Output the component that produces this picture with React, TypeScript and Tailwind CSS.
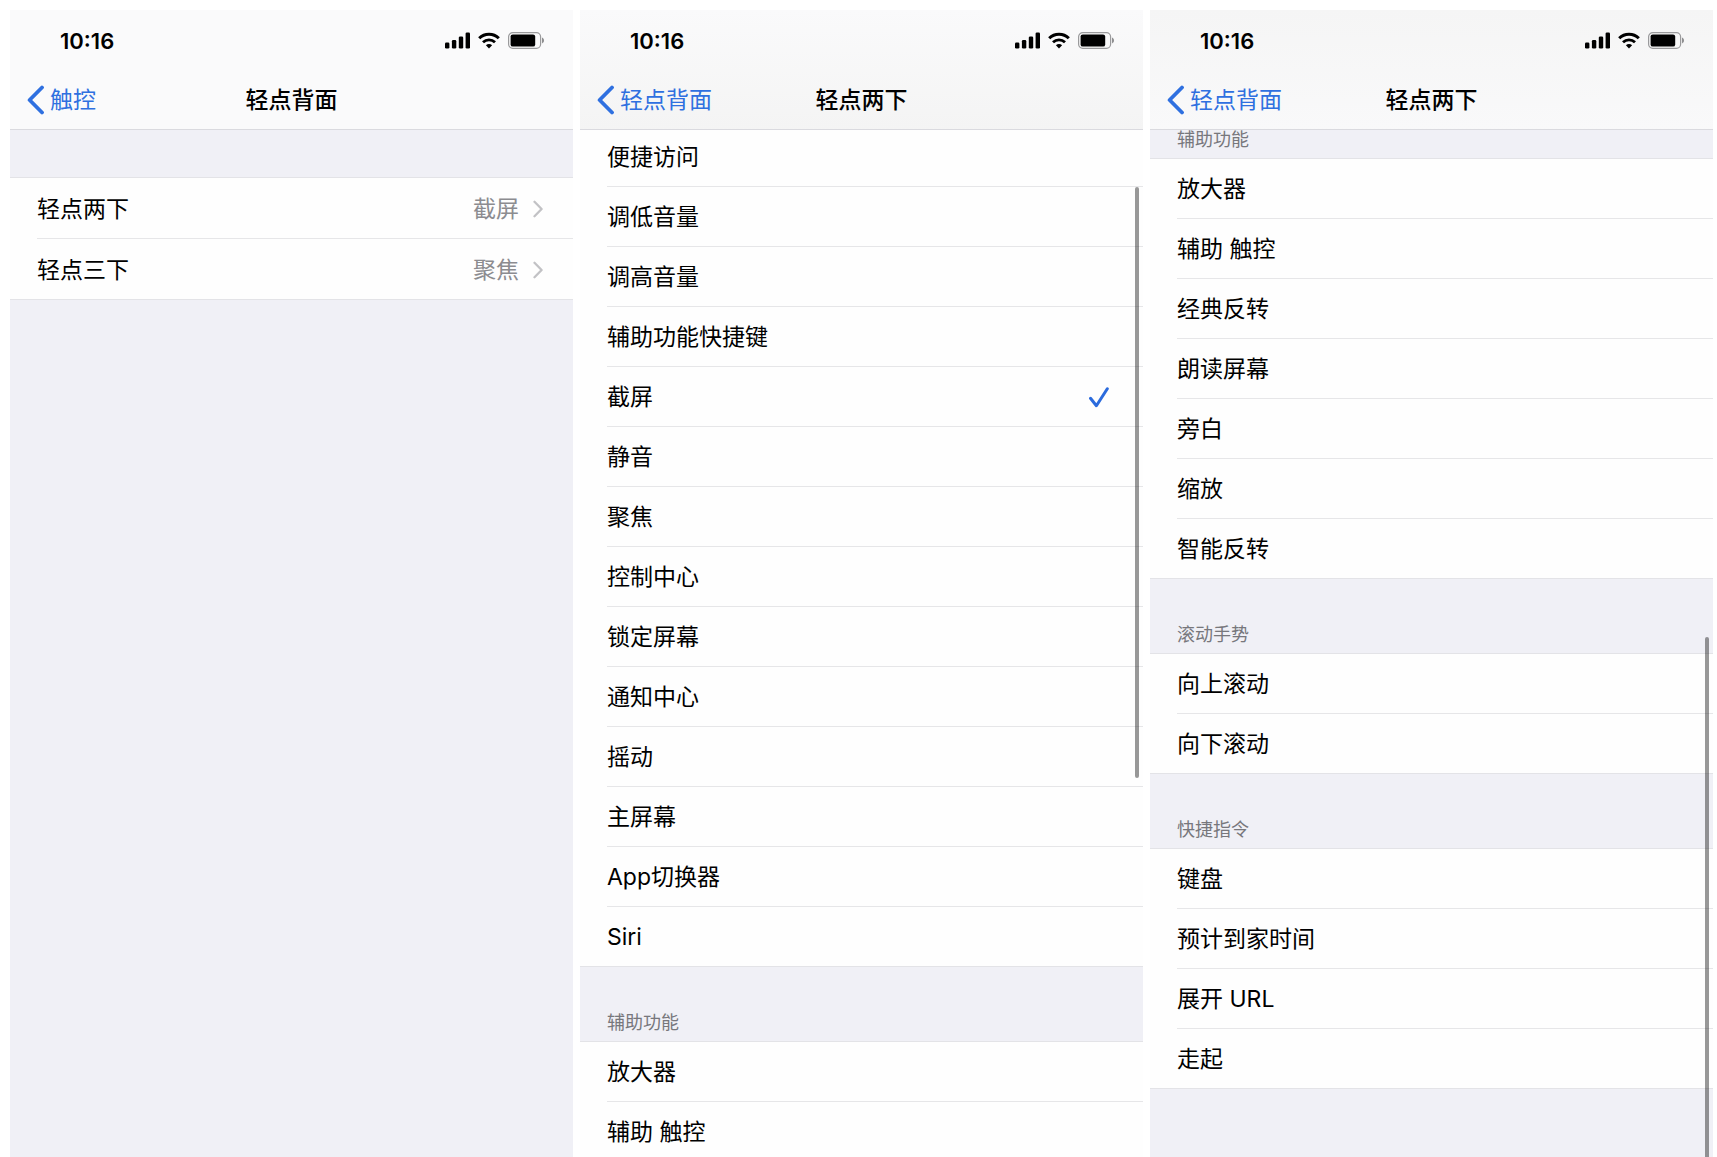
import React from "react";
import clsx from "clsx";

type TRow = {
  label: string;
  value?: string;
  selected?: boolean;
};

type TSection = {
  title?: string;
  rows: TRow[];
};

interface ScreenProps {
  back: string;
  title: string;
  sections: TSection[];
  headerClassName: string;
  listClassName?: string;
  scrollbarClassName?: string;
}

const backTapSections: TSection[] = [
  {
    rows: [
      { label: "轻点两下", value: "截屏" },
      { label: "轻点三下", value: "聚焦" },
    ],
  },
];

const systemSections: TSection[] = [
  {
    rows: [
      { label: "便捷访问" },
      { label: "调低音量" },
      { label: "调高音量" },
      { label: "辅助功能快捷键" },
      { label: "截屏", selected: true },
      { label: "静音" },
      { label: "聚焦" },
      { label: "控制中心" },
      { label: "锁定屏幕" },
      { label: "通知中心" },
      { label: "摇动" },
      { label: "主屏幕" },
      { label: "App切换器" },
      { label: "Siri" },
    ],
  },
  {
    title: "辅助功能",
    rows: [{ label: "放大器" }, { label: "辅助 触控" }],
  },
];

const moreSections: TSection[] = [
  {
    title: "辅助功能",
    rows: [
      { label: "放大器" },
      { label: "辅助 触控" },
      { label: "经典反转" },
      { label: "朗读屏幕" },
      { label: "旁白" },
      { label: "缩放" },
      { label: "智能反转" },
    ],
  },
  {
    title: "滚动手势",
    rows: [{ label: "向上滚动" }, { label: "向下滚动" }],
  },
  {
    title: "快捷指令",
    rows: [
      { label: "键盘" },
      { label: "预计到家时间" },
      { label: "展开 URL" },
      { label: "走起" },
    ],
  },
];

const SignalIcon = () => (
  <svg width="25" height="17" viewBox="0 0 25 17" fill="currentColor" aria-hidden="true">
    <rect x="0" y="10.5" width="4.4" height="6" rx="1.3" />
    <rect x="6.9" y="8" width="4.4" height="8.5" rx="1.3" />
    <rect x="13.8" y="4.4" width="4.4" height="12.1" rx="1.3" />
    <rect x="20.6" y="0.5" width="4.4" height="16" rx="1.3" />
  </svg>
);

const WifiIcon = () => (
  <svg width="22" height="17" viewBox="0 0 22 17" fill="none" stroke="currentColor" aria-hidden="true">
    <path d="M1.2 6.3C6.6 0.9 15.4 0.9 20.8 6.3" strokeWidth="3" />
    <path d="M5 10.3C8.4 7 13.6 7 17 10.3" strokeWidth="2.8" />
    <path d="M11 16.5L7.9 13.3C9.6 11.7 12.4 11.7 14.1 13.3Z" fill="currentColor" stroke="none" />
  </svg>
);

const BatteryIcon = () => (
  <svg width="36" height="17" viewBox="0 0 36 17" aria-hidden="true">
    <rect x="0.6" y="0.6" width="32" height="15.8" rx="4.2" fill="none" stroke="#9a9a9c" strokeWidth="1.2" />
    <rect x="2.6" y="2.4" width="24.6" height="12.2" rx="2.2" fill="currentColor" />
    <path d="M34 5.6C35.3 6.2 36 7.2 36 8.5C36 9.8 35.3 10.8 34 11.4Z" fill="#8e8e90" />
  </svg>
);

const BackIcon = () => (
  <svg width="17" height="30" viewBox="0 0 17 30" fill="none" aria-hidden="true">
    <path d="M15 2.5L2.6 15L15 27.5" stroke="currentColor" strokeWidth="3.8" strokeLinecap="round" strokeLinejoin="round" />
  </svg>
);

const ChevronIcon = () => (
  <svg width="10" height="18" viewBox="0 0 10 18" fill="none" aria-hidden="true">
    <path d="M1.5 1.8L8.6 9L1.5 16.2" stroke="#c2c2c5" strokeWidth="2.3" strokeLinecap="round" strokeLinejoin="round" />
  </svg>
);

const CheckIcon = () => (
  <svg width="20" height="21" viewBox="0 0 20 21" fill="none" aria-label="已选择" role="img">
    <path d="M1.5 11.3L7.4 18.7L18.3 1.8" stroke="#2b6bdd" strokeWidth="3" strokeLinecap="round" strokeLinejoin="round" />
  </svg>
);

const StatusBar = () => (
  <div className="flex h-[61px] items-center justify-between pl-[50px] pr-[29px] text-black">
    <span className="pt-0.5 text-[22px] font-semibold">10:16</span>
    <div className="flex items-center gap-2">
      <SignalIcon />
      <WifiIcon />
      <BatteryIcon />
    </div>
  </div>
);

const Row: React.FC<{ row: TRow; last: boolean }> = ({ row, last }) => (
  <li className={clsx("bg-[#fefefe]", last ? "border-b border-[#e3e3e7]" : "pl-[27px]")}>
    <button
      type="button"
      className={clsx(
        "flex w-full items-center pt-0.5 text-left text-[23px] text-black",
        row.value ? "pr-[30px]" : "pr-[34px]",
        last ? "pl-[27px]" : "border-b border-[#e6e6e8]",
        row.value ? (last ? "h-15" : "h-[61px]") : last ? "h-[59px]" : "h-15"
      )}
    >
      <span className="flex-1">{row.label}</span>
      {row.value && (
        <span className="flex items-center gap-3.5 text-[#8c8c90]">
          {row.value}
          <ChevronIcon />
        </span>
      )}
      {row.selected && <CheckIcon />}
    </button>
  </li>
);

const Section: React.FC<{ section: TSection }> = ({ section }) => (
  <section>
    {section.title && (
      <h2 className="flex h-[75px] items-end border-b border-[#e3e3e7] px-[27px] pb-1 text-[18px] leading-7 text-[#77777c]">
        {section.title}
      </h2>
    )}
    <ul>
      {section.rows.map((row, index) => (
        <Row key={row.label} row={row} last={index === section.rows.length - 1} />
      ))}
    </ul>
  </section>
);

const Screen: React.FC<ScreenProps> = ({
  back,
  title,
  sections,
  headerClassName,
  listClassName,
  scrollbarClassName,
}) => (
  <div className="relative flex min-w-0 flex-1 flex-col overflow-hidden bg-[#f0f0f6]">
    <header className={clsx("relative z-10 shrink-0", headerClassName)}>
      <StatusBar />
      <nav className="grid h-[59px] grid-cols-[1fr_auto_1fr] items-center border-b border-[#dadadf] px-[17px] text-[23px]">
        <a href="#" className="flex items-center gap-1.5 text-[#2f70e0]">
          <BackIcon />
          {back}
        </a>
        <h1 className="font-medium text-black">{title}</h1>
      </nav>
    </header>
    <main className={listClassName}>
      {sections.map((section, index) => (
        <Section key={index} section={section} />
      ))}
    </main>
    {scrollbarClassName && (
      <div className={clsx("absolute right-1 w-1 bg-black/40", scrollbarClassName)} />
    )}
  </div>
);

const App: React.FC = () => {
  return (
    <div className="flex h-screen gap-[7px] overflow-hidden bg-white pl-2.5 pr-1 pt-2.5 font-[Inter,'Noto_Sans_CJK_SC',sans-serif]">
      <Screen
        back="触控"
        title="轻点背面"
        sections={backTapSections}
        headerClassName="bg-[#fafafb]"
        listClassName="mt-[47px] border-t border-[#e3e3e7]"
      />
      <Screen
        back="轻点背面"
        title="轻点两下"
        sections={systemSections}
        headerClassName="bg-linear-to-b from-[#fafafb] to-[#f4f4f4]"
        listClassName="-mt-[3px]"
        scrollbarClassName="top-[177px] h-[591px] rounded-full"
      />
      <Screen
        back="轻点背面"
        title="轻点两下"
        sections={moreSections}
        headerClassName="bg-linear-to-b from-[#f5f5f5] to-[#f9f9fa]"
        listClassName="-mt-[46px]"
        scrollbarClassName="bottom-0 top-[627px] rounded-t-full"
      />
    </div>
  );
};

export default App;
